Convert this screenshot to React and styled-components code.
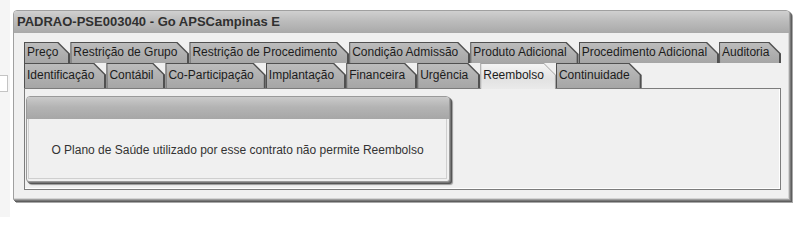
import styled, { createGlobalStyle } from "styled-components";

const GlobalStyle = createGlobalStyle`
  html, body {
    margin: 0;
    padding: 0;
    background: #fff;
  }
  body {
    font-family: "Liberation Sans", Arial, sans-serif;
  }
`;

const row1 = [
  "Preço",
  "Restrição de Grupo",
  "Restrição de Procedimento",
  "Condição Admissão",
  "Produto Adicional",
  "Procedimento Adicional",
  "Auditoria",
];

const row2 = [
  "Identificação",
  "Contábil",
  "Co-Participação",
  "Implantação",
  "Financeira",
  "Urgência",
  "Reembolso",
  "Continuidade",
];

const ACTIVE = "Reembolso";

export default function App() {
  return (
    <>
      <GlobalStyle />
      <Page>
        <SideStrip>
          <SideInput />
        </SideStrip>
        <Window>
          <TitleBar>PADRAO-PSE003040 - Go APSCampinas E</TitleBar>
          <WindowBody>
            <TabRow $h={21}>
              {row1.map((t) => (
                <Tab key={t}>
                  <TabLabel>{t}</TabLabel>
                </Tab>
              ))}
            </TabRow>
            <TabRow $h={25}>
              {row2.map((t) => (
                <Tab key={t} $active={t === ACTIVE} $top={2}>
                  <TabLabel>{t}</TabLabel>
                </Tab>
              ))}
            </TabRow>
            <Panel>
              <MessageBox>
                <BoxHeader />
                <BoxBody>
                  O Plano de Saúde utilizado por esse contrato não permite Reembolso
                </BoxBody>
              </MessageBox>
            </Panel>
          </WindowBody>
        </Window>
      </Page>
    </>
  );
}

const Page = styled.div`
  display: flex;
  height: 217px;
  width: 803px;
  overflow: hidden;
`;

const SideStrip = styled.div`
  width: 10px;
  flex-shrink: 0;
  background: #f5f5f5;
  padding-top: 75px;
  box-sizing: border-box;
`;

const SideInput = styled.div`
  width: 8px;
  height: 17px;
  box-sizing: border-box;
  background: #fff;
  border: 1px solid #c4c4c4;
  border-left: none;
`;

const Window = styled.div`
  margin: 10px 0 0 3px;
  width: 777px;
  height: 190px;
  box-sizing: border-box;
  display: flex;
  flex-direction: column;
  background: #f0f0f0;
  border: 1px solid #a0a0a0;
  border-radius: 4px 4px 0 0;
  box-shadow: inset -1px -1px 0 #d4d4d4, 1px 1px 0 #7a7a7a, 2px 2px 0 #5e5e5e,
    3px 3px 0 #a8a8a8;
`;

const TitleBar = styled.div`
  height: 22px;
  line-height: 22px;
  padding-left: 3px;
  font-size: 13px;
  font-weight: bold;
  color: #303030;
  border-radius: 3px 3px 0 0;
  background: linear-gradient(#d0d0d0, #bcbcbc 45%, #a9a9a9);
  white-space: nowrap;
`;

const WindowBody = styled.div`
  flex: 1;
  display: flex;
  flex-direction: column;
  padding: 9px 8px 9px 10px;
`;

const TabRow = styled.div`
  display: flex;
  height: ${(p) => p.$h}px;
  flex-shrink: 0;
`;

const Tab = styled.div`
  position: relative;
  z-index: ${(p) => (p.$active ? 2 : 1)};
  margin-bottom: ${(p) => (p.$active ? "-1px" : "0")};
  padding: ${(p) => p.$top || 0}px 12px 0 3px;
  font-size: 12px;
  line-height: 20px;
  color: #1c1c1c;
  white-space: nowrap;
  background: ${(p) => (p.$active ? "#a2a2a2" : "#505050")};
  clip-path: polygon(0 0, calc(100% - 12px) 0, 100% 12px, 100% 100%, 0 100%);

  &::before {
    content: "";
    position: absolute;
    inset: 1px ${(p) => (p.$active ? "1px" : "2px")} 0 1px;
    background: ${(p) =>
      p.$active
        ? "linear-gradient(#f4f4f4, #e2e2e2 60%, #eaeaea)"
        : "linear-gradient(#bcbcbc, #aeaeae 60%, #a6a6a6)"};
    clip-path: polygon(0 0, calc(100% - 11px) 0, 100% 11px, 100% 100%, 0 100%);
  }
`;

const TabLabel = styled.span`
  position: relative;
`;

const Panel = styled.div`
  flex: 1;
  background: #f0f0f0;
  border: 1px solid #7c7c7c;
  box-shadow: inset -1px -1px 0 #fff;
  padding: 7px 0 0 1px;
`;

const MessageBox = styled.div`
  width: 424px;
  height: 86px;
  box-sizing: border-box;
  display: flex;
  flex-direction: column;
  border: 1px solid #9a9a9a;
  border-radius: 4px 4px 3px 3px;
  background: #f0f0f0;
  box-shadow: 1px 1px 0 #777, 2px 2px 0 #555, 3px 3px 1px #9a9a9a;
`;

const BoxHeader = styled.div`
  height: 22px;
  flex-shrink: 0;
  border-radius: 3px 3px 0 0;
  background: linear-gradient(#cacaca, #b4b4b4 45%, #a6a6a6);
`;

const BoxBody = styled.div`
  flex: 1;
  display: flex;
  align-items: center;
  justify-content: center;
  padding-top: 2px;
  font-size: 12px;
  color: #333;
  border: 1px solid #cfcfcf;
  border-top: none;
  margin: 0 2px 2px 1px;
`;
